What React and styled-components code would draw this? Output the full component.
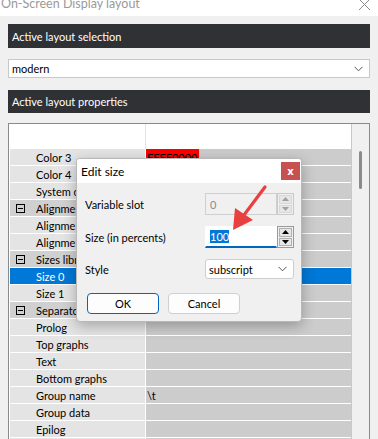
import React from 'react';
import styled, { createGlobalStyle } from 'styled-components';

const Global = createGlobalStyle`
  html, body {
    margin: 0;
    padding: 0;
    background: #f0f0f0;
    font-family: Lato, "Liberation Sans", sans-serif;
    font-size: 11px;
    color: #000;
  }
`;

const Page = styled.div`
  position: relative;
  width: 378px;
  height: 439px;
  overflow: hidden;
  background: #f0f0f0;
`;

const TitleBar = styled.div`
  height: 16px;
  background: #fff;
  display: flex;
  justify-content: space-between;
  overflow: hidden;
`;

const TitleText = styled.div`
  margin: -6px 0 0 1px;
  font-size: 12.5px;
  line-height: 20px;
  color: #9a9a9a;
`;

const CloseGlyph = styled.svg`
  width: 13px;
  height: 10px;
  margin: 0 7px 0 0;
`;

const Body = styled.div`
  padding: 8px 8px 0 8px;
  display: flex;
  flex-direction: column;
`;

const SectionHeader = styled.div`
  height: ${p => p.$h}px;
  margin-top: ${p => p.$mt}px;
  background: #303135;
  color: #fff;
  display: flex;
  align-items: center;
  padding-left: 4px;
  font-size: 11px;
`;

const Select = styled.div`
  height: 19px;
  margin-top: 11px;
  background: #fff;
  border: 1px solid #c8c8c8;
  box-sizing: border-box;
  display: flex;
  align-items: center;
  justify-content: space-between;
  padding: 0 6px 0 3px;
  font-size: 11px;
`;

const Chevron = ({ color = '#555' }) => (
  <svg width="9" height="6" viewBox="0 0 9 6">
    <polyline points="0.5,0.8 4.5,4.8 8.5,0.8" fill="none" stroke={color} strokeWidth="1" />
  </svg>
);

const Grid = styled.div`
  margin-top: 10px;
  border: 1px solid #8a8a8a;
  border-bottom: none;
  background: #fff;
  display: flex;
  height: 320px;
`;

const Table = styled.div`
  flex: 1;
  padding: 0 0 0 1px;
  display: flex;
  flex-direction: column;
  border-right: 1px solid #c8c8c8;
`;

const HeaderRow = styled.div`
  height: 25px;
  display: flex;
  flex-shrink: 0;
`;

const HeaderCell = styled.div`
  width: ${p => p.$w}px;
  flex: ${p => (p.$w ? 'none' : 1)};
  border-right: ${p => (p.$w ? '1px solid #e4e4e4' : 'none')};
`;

const Row = styled.div`
  height: 16px;
  flex-shrink: 0;
  display: flex;
  border-bottom: 1px solid #fff;
  background: ${p => (p.$sel ? '#0078d7' : 'transparent')};
  color: ${p => (p.$sel ? '#fff' : '#000')};
`;

const NameCell = styled.div`
  width: 135px;
  display: flex;
  align-items: center;
  border-right: 1px solid #fff;
  background: ${p => (p.$sel ? '#0078d7' : p.$group ? '#d0d0d0' : '#e4e4e4')};
  white-space: nowrap;
  overflow: hidden;
  font-size: 11px;
`;

const Indent = styled.div`
  width: 26px;
  display: flex;
  align-items: center;
  justify-content: center;
`;

const Minus = styled.div`
  width: 7px;
  height: 7px;
  border: 1px solid #000;
  position: relative;
  margin-right: 6px;
  &::after {
    content: '';
    position: absolute;
    left: 1px;
    right: 1px;
    top: 3px;
    height: 1px;
    background: #000;
  }
`;

const ValueCell = styled.div`
  flex: 1;
  display: flex;
  align-items: center;
  background: ${p => (p.$sel ? '#0078d7' : '#cccccc')};
  font-size: 11px;
`;

const Swatch = styled.div`
  width: 53px;
  height: 100%;
  background: #ff0000;
  color: #000;
  display: flex;
  align-items: center;
  overflow: hidden;
  padding-left: 1px;
  box-sizing: border-box;
`;

const ValueText = styled.span`
  padding-left: 1px;
`;

const Scrollbar = styled.div`
  width: 17px;
  background: #f0f0f0;
  display: flex;
  justify-content: center;
  padding-top: 27px;
`;

const Thumb = styled.div`
  width: 3px;
  height: 38px;
  border-radius: 2px;
  background: #8a8a8a;
`;

const Dialog = styled.div`
  position: absolute;
  left: 76px;
  top: 158px;
  width: 226px;
  height: 164px;
  box-sizing: border-box;
  background: #f0f0f0;
  border: 1px solid #b8b8b8;
  border-radius: 4px;
  box-shadow: 0 4px 14px rgba(0, 0, 0, 0.28);
  display: flex;
  flex-direction: column;
  overflow: hidden;
`;

const DialogTitle = styled.div`
  height: 24px;
  background: #fff;
  display: flex;
  align-items: center;
  justify-content: space-between;
  padding: 0 0 0 4px;
  font-size: 12px;
`;

const RedClose = styled.div`
  width: 19px;
  height: 18px;
  margin-right: 1px;
  background: #c75050;
  color: #fff;
  display: flex;
  align-items: center;
  justify-content: center;
  font-family: "DejaVu Sans", sans-serif;
  font-weight: bold;
  font-size: 10px;
`;

const Form = styled.div`
  display: grid;
  grid-template-columns: 120px 89px;
  grid-template-rows: 22px 22px 20px;
  row-gap: 11px;
  padding: 10px 0 0 8px;
  align-items: center;
`;

const Label = styled.div`
  font-size: 11px;
`;

const SpinWrap = styled.div`
  display: flex;
  height: 22px;
`;

const SpinInput = styled.div`
  width: 72px;
  box-sizing: border-box;
  background: ${p => (p.$disabled ? '#f0f0f0' : '#fff')};
  border: 1px solid ${p => (p.$disabled ? '#cfcfcf' : '#fff')};
  border-bottom: ${p => (p.$disabled ? '1px solid #cfcfcf' : '2px solid #0067c0')};
  color: ${p => (p.$disabled ? '#8a8a8a' : '#000')};
  display: flex;
  align-items: center;
  padding-left: 4px;
  font-size: 11px;
`;

const Selected = styled.span`
  background: #0078d7;
  color: #fff;
`;

const SpinBtns = styled.div`
  width: 17px;
  box-sizing: border-box;
  border: 1px solid ${p => (p.$disabled ? '#c8c8c8' : '#9a9a9a')};
  display: flex;
  flex-direction: column;
  padding: 1px;
  gap: 1px;
`;

const SpinBtn = styled.div`
  flex: 1;
  background: #e6e6e6;
  border: 1px solid ${p => (p.$disabled ? '#d8d8d8' : '#b0b0b0')};
  display: flex;
  align-items: center;
  justify-content: center;
`;

const Tri = ({ up, color }) => (
  <svg width="7" height="4" viewBox="0 0 7 4">
    <polygon points={up ? '0,4 7,4 3.5,0' : '0,0 7,0 3.5,4'} fill={color} />
  </svg>
);

const StyleSelect = styled.div`
  height: 20px;
  box-sizing: border-box;
  background: #fff;
  border: 1px solid #cdcdcd;
  border-radius: 3px;
  display: flex;
  align-items: center;
  justify-content: space-between;
  padding: 0 6px 0 3px;
  font-size: 11px;
`;

const Buttons = styled.div`
  display: flex;
  gap: 9px;
  padding: 14px 0 0 10px;
`;

const Button = styled.div`
  width: 72px;
  height: 21px;
  box-sizing: border-box;
  background: #fdfdfd;
  border: 1px solid ${p => (p.$primary ? '#0067c0' : '#d0d0d0')};
  border-radius: 4px;
  display: flex;
  align-items: center;
  justify-content: center;
  font-size: 11px;
`;

const Arrow = styled.svg`
  position: absolute;
  left: 0;
  top: 0;
  pointer-events: none;
`;

const rows = [
  { name: 'Color 3', value: 'FFFF0000', swatch: true },
  { name: 'Color 4' },
  { name: 'System c' },
  { name: 'Alignment', group: true },
  { name: 'Alignment' },
  { name: 'Alignment' },
  { name: 'Sizes library', group: true },
  { name: 'Size 0', sel: true },
  { name: 'Size 1' },
  { name: 'Separators', group: true },
  { name: 'Prolog' },
  { name: 'Top graphs' },
  { name: 'Text' },
  { name: 'Bottom graphs' },
  { name: 'Group name', value: '\\t' },
  { name: 'Group data' },
  { name: 'Epilog' },
  { name: '' },
];

export default function App() {
  return (
    <Page>
      <Global />
      <TitleBar>
        <TitleText>On-Screen Display layout</TitleText>
        <CloseGlyph viewBox="0 0 13 10">
          <path d="M1 -1 L12 10 M12 -1 L1 10" stroke="#8a8a8a" strokeWidth="1" />
        </CloseGlyph>
      </TitleBar>
      <Body>
        <SectionHeader $h={24} $mt={0}>Active layout selection</SectionHeader>
        <Select>
          <span>modern</span>
          <Chevron />
        </Select>
        <SectionHeader $h={23} $mt={12}>Active layout properties</SectionHeader>
        <Grid>
          <Table>
            <HeaderRow>
              <HeaderCell $w={135} />
              <HeaderCell />
            </HeaderRow>
            {rows.map((r, i) => (
              <Row key={i} $sel={r.sel}>
                <NameCell $group={r.group} $sel={r.sel}>
                  <Indent>{r.group && <Minus />}</Indent>
                  {r.name}
                </NameCell>
                <ValueCell $sel={r.sel}>
                  {r.swatch ? (
                    <Swatch>{r.value}</Swatch>
                  ) : (
                    r.value && <ValueText>{r.value}</ValueText>
                  )}
                </ValueCell>
              </Row>
            ))}
          </Table>
          <Scrollbar>
            <Thumb />
          </Scrollbar>
        </Grid>
      </Body>

      <Dialog>
        <DialogTitle>
          <span>Edit size</span>
          <RedClose>x</RedClose>
        </DialogTitle>
        <Form>
          <Label>Variable slot</Label>
          <SpinWrap>
            <SpinInput $disabled>0</SpinInput>
            <SpinBtns $disabled>
              <SpinBtn $disabled><Tri up color="#a0a0a0" /></SpinBtn>
              <SpinBtn $disabled><Tri color="#a0a0a0" /></SpinBtn>
            </SpinBtns>
          </SpinWrap>
          <Label>Size (in percents)</Label>
          <SpinWrap>
            <SpinInput><Selected>100</Selected></SpinInput>
            <SpinBtns>
              <SpinBtn><Tri up color="#000" /></SpinBtn>
              <SpinBtn><Tri color="#000" /></SpinBtn>
            </SpinBtns>
          </SpinWrap>
          <Label>Style</Label>
          <StyleSelect>
            <span>subscript</span>
            <Chevron />
          </StyleSelect>
        </Form>
        <Buttons>
          <Button $primary>OK</Button>
          <Button>Cancel</Button>
        </Buttons>
      </Dialog>

      <Arrow width="378" height="439" viewBox="0 0 378 439">
        <line x1="265" y1="187" x2="244" y2="215" stroke="#e84040" strokeWidth="3.2" strokeLinecap="round" />
        <polygon points="233,230 235,208 253,220" fill="#e84040" />
      </Arrow>
    </Page>
  );
}
